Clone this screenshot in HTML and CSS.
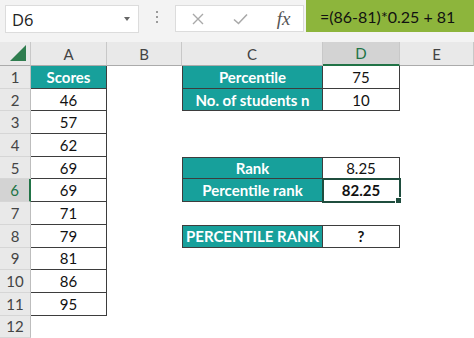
FILE: index.html
```html
<!DOCTYPE html>
<html>
<head>
<meta charset="utf-8">
<link rel="stylesheet" href="styles.css">
</head>
<body>
<div class="bar">
  <div class="namebox"><span>D6</span><span class="caret"></span></div>
  <div class="dots"><i></i><i></i><i></i></div>
  <div class="fxbox">
    <span class="slot"><svg width="12" height="12" viewBox="0 0 12 12"><path d="M1 1L11 11M11 1L1 11" stroke="#a9a9a9" stroke-width="1.4" fill="none"/></svg></span>
    <span class="slot"><svg width="15" height="12" viewBox="0 0 15 12"><path d="M1 6.5L5.5 10.5L14 1.5" stroke="#a9a9a9" stroke-width="1.6" fill="none"/></svg></span>
    <span class="slot fx">fx</span>
  </div>
  <div class="formula">=(86-81)*0.25 + 81</div>
</div>
<div class="sheet">
  <div class="corner"><svg width="17" height="17" viewBox="0 0 17 17"><path d="M16 0V16H0Z" fill="#2f7d4f"/></svg></div>
  <div class="ch">A</div>
  <div class="ch">B</div>
  <div class="ch">C</div>
  <div class="ch sel">D</div>
  <div class="ch">E</div>

  <div class="rh">1</div>
  <div class="c t bx">Scores</div>
  <div class="c"></div>
  <div class="c t bx bl">Percentile</div>
  <div class="c bx">75</div>
  <div class="c"></div>

  <div class="rh">2</div>
  <div class="c bx">46</div>
  <div class="c"></div>
  <div class="c t bx bl">No. of students n</div>
  <div class="c bx">10</div>
  <div class="c"></div>

  <div class="rh">3</div>
  <div class="c bx">57</div>
  <div class="c"></div>
  <div class="c"></div>
  <div class="c"></div>
  <div class="c"></div>

  <div class="rh">4</div>
  <div class="c bx">62</div>
  <div class="c"></div>
  <div class="c"></div>
  <div class="c"></div>
  <div class="c"></div>

  <div class="rh">5</div>
  <div class="c bx">69</div>
  <div class="c"></div>
  <div class="c t bx bl bt">Rank</div>
  <div class="c bx bt">8.25</div>
  <div class="c"></div>

  <div class="rh sel">6</div>
  <div class="c bx">69</div>
  <div class="c"></div>
  <div class="c t bx bl">Percentile rank</div>
  <div class="c bx active b">82.25</div>
  <div class="c"></div>

  <div class="rh">7</div>
  <div class="c bx">71</div>
  <div class="c"></div>
  <div class="c"></div>
  <div class="c"></div>
  <div class="c"></div>

  <div class="rh">8</div>
  <div class="c bx">79</div>
  <div class="c"></div>
  <div class="c t bx bl bt">PERCENTILE RANK</div>
  <div class="c bx bt b">?</div>
  <div class="c"></div>

  <div class="rh">9</div>
  <div class="c bx">81</div>
  <div class="c"></div>
  <div class="c"></div>
  <div class="c"></div>
  <div class="c"></div>

  <div class="rh">10</div>
  <div class="c bx">86</div>
  <div class="c"></div>
  <div class="c"></div>
  <div class="c"></div>
  <div class="c"></div>

  <div class="rh">11</div>
  <div class="c bx">95</div>
  <div class="c"></div>
  <div class="c"></div>
  <div class="c"></div>
  <div class="c"></div>

  <div class="rh">12</div>
  <div class="c"></div>
  <div class="c"></div>
  <div class="c"></div>
  <div class="c"></div>
  <div class="c"></div>
</div>
</body>
</html>
```

FILE: styles.css
```css
* { box-sizing: border-box; margin: 0; padding: 0; }
html, body { margin: 0; background: #fff; }
body {
  width: 474px;
  height: 338px;
  overflow: hidden;
  font-family: Lato, "Liberation Sans", sans-serif;
}
.bar {
  display: flex;
  align-items: flex-start;
  height: 42px;
  background: #f3f3f3;
}
.namebox {
  margin: 5px 0 0 5px;
  width: 134px;
  height: 28px;
  background: #fff;
  border: 1px solid #dcdcdc;
  display: flex;
  align-items: center;
  justify-content: space-between;
  padding: 0 8px 0 6px;
  font-family: "Open Sans", sans-serif;
  font-size: 16.5px;
  color: #222;
}
.caret {
  width: 0;
  height: 0;
  border-left: 3.5px solid transparent;
  border-right: 3.5px solid transparent;
  border-top: 4px solid #666;
}
.dots {
  width: 36px;
  display: flex;
  flex-direction: column;
  align-items: center;
  gap: 3px;
  padding-top: 11px;
}
.dots i { display: block; width: 2px; height: 2px; background: #9a9a9a; }
.fxbox {
  margin-top: 5px;
  width: 129px;
  height: 27px;
  background: #fff;
  border: 1px solid #dcdcdc;
  display: flex;
  align-items: center;
  padding-left: 1px;
}
.slot {
  width: 42px;
  display: flex;
  justify-content: center;
  align-items: center;
}
.fx {
  font-family: "Liberation Serif", serif;
  font-style: italic;
  font-size: 19px;
  color: #555;
  padding-left: 3px;
}
.formula {
  margin-left: 2px;
  flex: 1;
  height: 32px;
  background: #8db53c;
  color: #111;
  font-size: 16px;
  padding-left: 14px;
  display: flex;
  align-items: center;
  white-space: nowrap;
}
.sheet {
  display: grid;
  grid-template-columns: 31px 76px 75px 141px 77px 1fr;
  grid-template-rows: 24px repeat(12, 22.7px);
}
.corner {
  background: #e9e9e9;
  border-right: 1px solid #c8c8c8;
  border-bottom: 1px solid #ababab;
  display: flex;
  align-items: flex-end;
  justify-content: flex-end;
  padding: 0 3px 3px 0;
}
.ch {
  background: #e9e9e9;
  border-right: 1px solid #c8c8c8;
  border-bottom: 1px solid #ababab;
  display: flex;
  align-items: center;
  justify-content: center;
  color: #444;
  font-size: 15px;
}
.ch.sel {
  background: #d3d3d3;
  color: #217346;
  border-bottom: 2px solid #217346;
}
.rh {
  background: #e9e9e9;
  border-right: 1px solid #bdbdbd;
  border-bottom: 1px solid #d6d6d6;
  display: flex;
  align-items: center;
  justify-content: center;
  color: #444;
  font-size: 15px;
}
.rh.sel {
  background: #d3d3d3;
  color: #217346;
  border-right: 2px solid #217346;
}
.c {
  display: flex;
  align-items: center;
  justify-content: center;
  font-size: 15px;
  color: #111;
  white-space: nowrap;
}
.t { background: #17a09b; color: #fff; font-weight: bold; }
.b { font-weight: bold; }
.bx { border-right: 1px solid #3d3d3d; border-bottom: 1px solid #3d3d3d; }
.bl { border-left: 1px solid #3d3d3d; }
.bt { border-top: 1px solid #3d3d3d; }
.active {
  position: relative;
  outline: 2px solid #1f4d3e;
  outline-offset: -1px;
}
.active::after {
  content: "";
  position: absolute;
  right: -3px;
  bottom: -3px;
  width: 5px;
  height: 5px;
  background: #1f4d3e;
  border: 1px solid #fff;
}
```
